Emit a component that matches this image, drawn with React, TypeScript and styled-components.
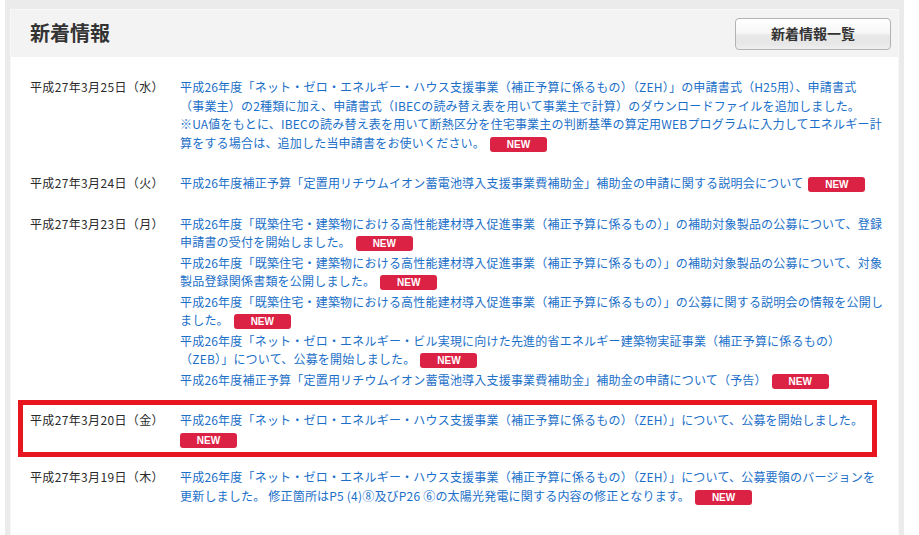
import styled, { createGlobalStyle } from 'styled-components'

interface NewsItem {
  lines: string[]
}

interface NewsEntry {
  date: string
  items: NewsItem[]
  highlight?: boolean
  badgeOwnLine?: boolean
}

const entries: NewsEntry[] = [
  {
    date: '平成27年3月25日（水）',
    items: [
      {
        lines: [
          '平成26年度「ネット・ゼロ・エネルギー・ハウス支援事業（補正予算に係るもの）（ZEH）」の申請書式（H25用）、申請書式',
          '（事業主）の2種類に加え、申請書式（IBECの読み替え表を用いて事業主で計算）のダウンロードファイルを追加しました。',
          '※UA値をもとに、IBECの読み替え表を用いて断熱区分を住宅事業主の判断基準の算定用WEBプログラムに入力してエネルギー計',
          '算をする場合は、追加した当申請書をお使いください。',
        ],
      },
    ],
  },
  {
    date: '平成27年3月24日（火）',
    items: [
      {
        lines: [
          '平成26年度補正予算「定置用リチウムイオン蓄電池導入支援事業費補助金」補助金の申請に関する説明会について',
        ],
      },
    ],
  },
  {
    date: '平成27年3月23日（月）',
    items: [
      {
        lines: [
          '平成26年度「既築住宅・建築物における高性能建材導入促進事業（補正予算に係るもの）」の補助対象製品の公募について、登録',
          '申請書の受付を開始しました。',
        ],
      },
      {
        lines: [
          '平成26年度「既築住宅・建築物における高性能建材導入促進事業（補正予算に係るもの）」の補助対象製品の公募について、対象',
          '製品登録関係書類を公開しました。',
        ],
      },
      {
        lines: [
          '平成26年度「既築住宅・建築物における高性能建材導入促進事業（補正予算に係るもの）」の公募に関する説明会の情報を公開し',
          'ました。',
        ],
      },
      {
        lines: [
          '平成26年度「ネット・ゼロ・エネルギー・ビル実現に向けた先進的省エネルギー建築物実証事業（補正予算に係るもの）',
          '（ZEB）」について、公募を開始しました。',
        ],
      },
      {
        lines: [
          '平成26年度補正予算「定置用リチウムイオン蓄電池導入支援事業費補助金」補助金の申請について（予告）',
        ],
      },
    ],
  },
  {
    date: '平成27年3月20日（金）',
    highlight: true,
    badgeOwnLine: true,
    items: [
      {
        lines: [
          '平成26年度「ネット・ゼロ・エネルギー・ハウス支援事業（補正予算に係るもの）（ZEH）」について、公募を開始しました。',
        ],
      },
    ],
  },
  {
    date: '平成27年3月19日（木）',
    items: [
      {
        lines: [
          '平成26年度「ネット・ゼロ・エネルギー・ハウス支援事業（補正予算に係るもの）（ZEH）」について、公募要領のバージョンを',
          '更新しました。 修正箇所はP5 (4)⑧及びP26 ⑥の太陽光発電に関する内容の修正となります。',
        ],
      },
    ],
  },
]

const App = () => {
  return (
    <>
      <GlobalStyle />
      <Frame>
        <Panel>
          <Header>
            <Title>新着情報</Title>
            <ListButton href="#">新着情報一覧</ListButton>
          </Header>
          <List>
            {entries.map(entry => (
              <Row key={entry.date} highlight={entry.highlight}>
                <DateCell>{entry.date}</DateCell>
                <Items>
                  {entry.items.map((item, i) => (
                    <Item key={i}>
                      <NewsLink href="#">
                        {item.lines.map((line, j) => (
                          <span key={j}>
                            {j > 0 && <br />}
                            {line}
                          </span>
                        ))}
                      </NewsLink>
                      {entry.badgeOwnLine && <br />}
                      <Badge ownLine={entry.badgeOwnLine}>NEW</Badge>
                    </Item>
                  ))}
                </Items>
              </Row>
            ))}
          </List>
        </Panel>
      </Frame>
    </>
  )
}

const GlobalStyle = createGlobalStyle`
  body {
    margin: 0;
    background: #fff;
    font-family: "Noto Sans CJK JP", "Noto Sans", sans-serif;
  }
`

const Frame = styled.div`
  margin-left: 5px;
  width: 889px;
  border: 5px solid #ebebeb;
  border-top-width: 9px;
  border-bottom: none;
`

const Panel = styled.div`
  border: 1px solid #f8f8f8;
  border-bottom: none;
  background: #fff;
`

const Header = styled.div`
  display: flex;
  align-items: center;
  justify-content: space-between;
  height: 47px;
  padding: 0 7px 0 19px;
  background: #f3f3f3;
`

const Title = styled.h2`
  margin: 0;
  font-size: 20px;
  font-weight: bold;
  color: #333;
  line-height: 1;
  padding-bottom: 2px;
`

const ListButton = styled.a`
  display: flex;
  align-items: center;
  justify-content: center;
  width: 154px;
  height: 29px;
  border: 1px solid #b3b3b3;
  border-radius: 4px;
  background: linear-gradient(
    to bottom,
    #ffffff 0%,
    #f7f7f7 45%,
    #e9e9e9 55%,
    #e6e6e6 80%,
    #efefef 100%
  );
  font-size: 14px;
  font-weight: bold;
  color: #333;
  text-decoration: none;
  padding-bottom: 1px;
`

const List = styled.div`
  padding: 10px 21px 60px 19px;
`

const Row = styled.div<{ highlight?: boolean }>`
  display: grid;
  grid-template-columns: 150px 1fr;
  padding: ${props => (props.highlight ? '6px 7px 4px' : '11px 0')};
  margin-left: ${props => (props.highlight ? '-12px' : '0')};
  border: ${props => (props.highlight ? '5px solid #e8161f' : 'none')};
  font-size: 12px;
  line-height: 18.5px;
  letter-spacing: 0.2px;
`

const DateCell = styled.div`
  color: #2a2a2a;
  white-space: nowrap;
  letter-spacing: 0.35px;
`

const Items = styled.div`
  display: flex;
  flex-direction: column;
  gap: 2px;
`

const Item = styled.div`
  white-space: nowrap;
`

const NewsLink = styled.a`
  color: #1b6fc8;
  text-decoration: none;
`

const Badge = styled.span<{ ownLine?: boolean }>`
  display: inline-block;
  width: 57px;
  height: 15px;
  margin-left: ${props => (props.ownLine ? '0' : '5px')};
  border-radius: 3px;
  background: #dc2244;
  color: #fff;
  font-family: "Liberation Sans", Arial, sans-serif;
  font-size: 10px;
  font-weight: bold;
  letter-spacing: 0;
  line-height: 15px;
  text-align: center;
  vertical-align: 0px;
`

export default App
